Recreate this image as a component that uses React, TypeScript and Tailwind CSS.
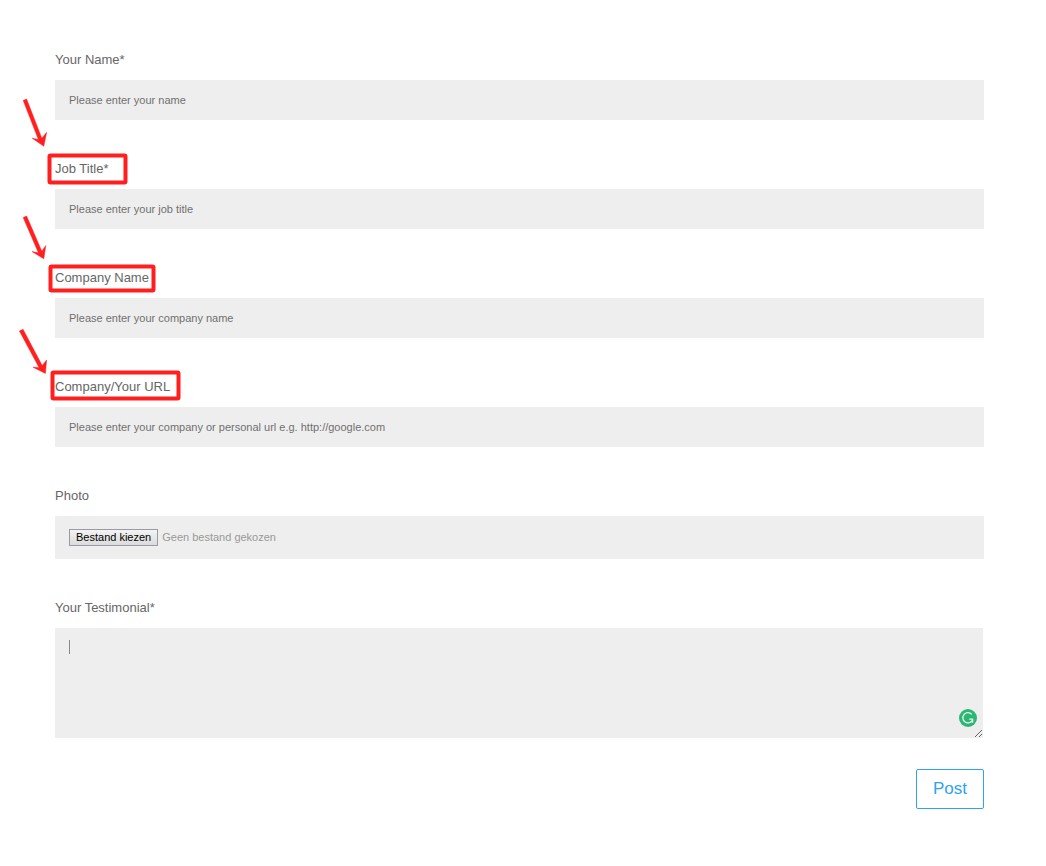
import type { ReactNode } from "react";

type Mark = {
  box: { x: number; y: number; width: number; height: number };
  arrow: string;
};

type TextField = {
  id: string;
  label: string;
  placeholder: string;
  type: string;
  mark?: Mark;
};

// Mark coordinates start at the top left corner of the field's label
const fields: TextField[] = [
  {
    id: "name",
    label: "Your Name*",
    placeholder: "Please enter your name",
    type: "text",
  },
  {
    id: "job-title",
    label: "Job Title*",
    placeholder: "Please enter your job title",
    type: "text",
    mark: {
      box: { x: -5.5, y: -3.5, width: 76, height: 27 },
      arrow: "-31.8,-58.5 -28.4,-60 -13.2,-20.8 -8.4,-26.6 -11.2,-12.8 -22.8,-20.8 -16.6,-19.4",
    },
  },
  {
    id: "company-name",
    label: "Company Name",
    placeholder: "Please enter your company name",
    type: "text",
    mark: {
      box: { x: -4.5, y: -1.5, width: 103, height: 24 },
      arrow: "-31.8,-50.4 -28.4,-52 -13.2,-16.8 -9.2,-22.4 -11.2,-9.2 -23,-16.4 -16.6,-15.2",
    },
  },
  {
    id: "url",
    label: "Company/Your URL",
    placeholder: "Please enter your company or personal url e.g. http://google.com",
    type: "text",
    mark: {
      box: { x: -2.5, y: -4.5, width: 126, height: 26 },
      arrow: "-35.6,-46 -32,-47.8 -12.8,-11.4 -8.4,-17 -9.6,-3.6 -22,-9.8 -16,-9.6",
    },
  },
];

function Highlight({ box, arrow }: Mark) {
  return (
    <svg
      className="pointer-events-none absolute left-0 top-0 h-px w-px overflow-visible"
      aria-hidden="true"
    >
      <rect {...box} rx="1" fill="none" stroke="#ff1f1f" strokeWidth="4" />
      <polygon points={arrow} fill="#ff1f1f" stroke="#ff1f1f" strokeWidth="0.5" />
    </svg>
  );
}

function Field({ id, label, mark, children }: { id: string; label: string; mark?: Mark; children: ReactNode }) {
  return (
    <div className="flex flex-col gap-2.5">
      <div className="relative flex">
        <label htmlFor={id} className="text-[13px] leading-5 text-[#666]">
          {label}
        </label>
        {mark && <Highlight {...mark} />}
      </div>
      {children}
    </div>
  );
}

export default function App() {
  return (
    <main className="min-h-screen bg-white pb-14 pl-[55px] pr-[62px] pt-[50px] font-['Liberation_Sans',Arial,sans-serif]">
      <form className="flex flex-col gap-[39px]" onSubmit={(e) => e.preventDefault()}>
        {fields.map((field) => (
          <Field key={field.id} id={field.id} label={field.label} mark={field.mark}>
            <input
              id={field.id}
              type={field.type}
              placeholder={field.placeholder}
              className="h-10 w-full bg-[#eee] px-3.5 text-[11px] text-[#666] outline-none placeholder:text-[#707070]"
            />
          </Field>
        ))}

        <Field id="photo" label="Photo">
          <div className="relative flex h-[43px] items-center gap-1 bg-[#eee] px-3.5 text-[11px]">
            <input id="photo" type="file" className="peer sr-only" />
            <label
              htmlFor="photo"
              className="border border-[#9a9aa2] bg-linear-to-b from-[#f3f3f3] to-[#dcdcdc] px-1.5 leading-[15px] text-black"
            >
              Bestand kiezen
            </label>
            <span className="text-[#999]">Geen bestand gekozen</span>
          </div>
        </Field>

        <Field id="testimonial" label="Your Testimonial*">
          <div className="relative flex pr-px">
            <textarea
              id="testimonial"
              className="h-[110px] w-full resize-y bg-[#eee] px-3.5 py-3 text-[11px] text-[#666] outline-none"
            />
            <span className="pointer-events-none absolute left-3.5 top-3 h-3.5 w-px bg-[#888]" />
            <svg
              viewBox="0 0 18 18"
              className="pointer-events-none absolute bottom-[11px] right-[7px] size-[18px]"
              aria-hidden="true"
            >
              <circle cx="9" cy="9" r="9" fill="#2bb673" />
              <path
                d="M12.8 5.4A5.1 5.1 0 1 0 13.2 11.6M10.2 10.2H13.6V13.8"
                fill="none"
                stroke="#e6f7ee"
                strokeWidth="1.3"
              />
            </svg>
          </div>
        </Field>

        <div className="-mt-2 flex justify-end">
          <button
            type="submit"
            className="h-10 rounded-[2px] border border-[#2ea3f2] bg-white px-4 text-[17px] text-[#2ea3f2]"
          >
            Post
          </button>
        </div>
      </form>
    </main>
  );
}
